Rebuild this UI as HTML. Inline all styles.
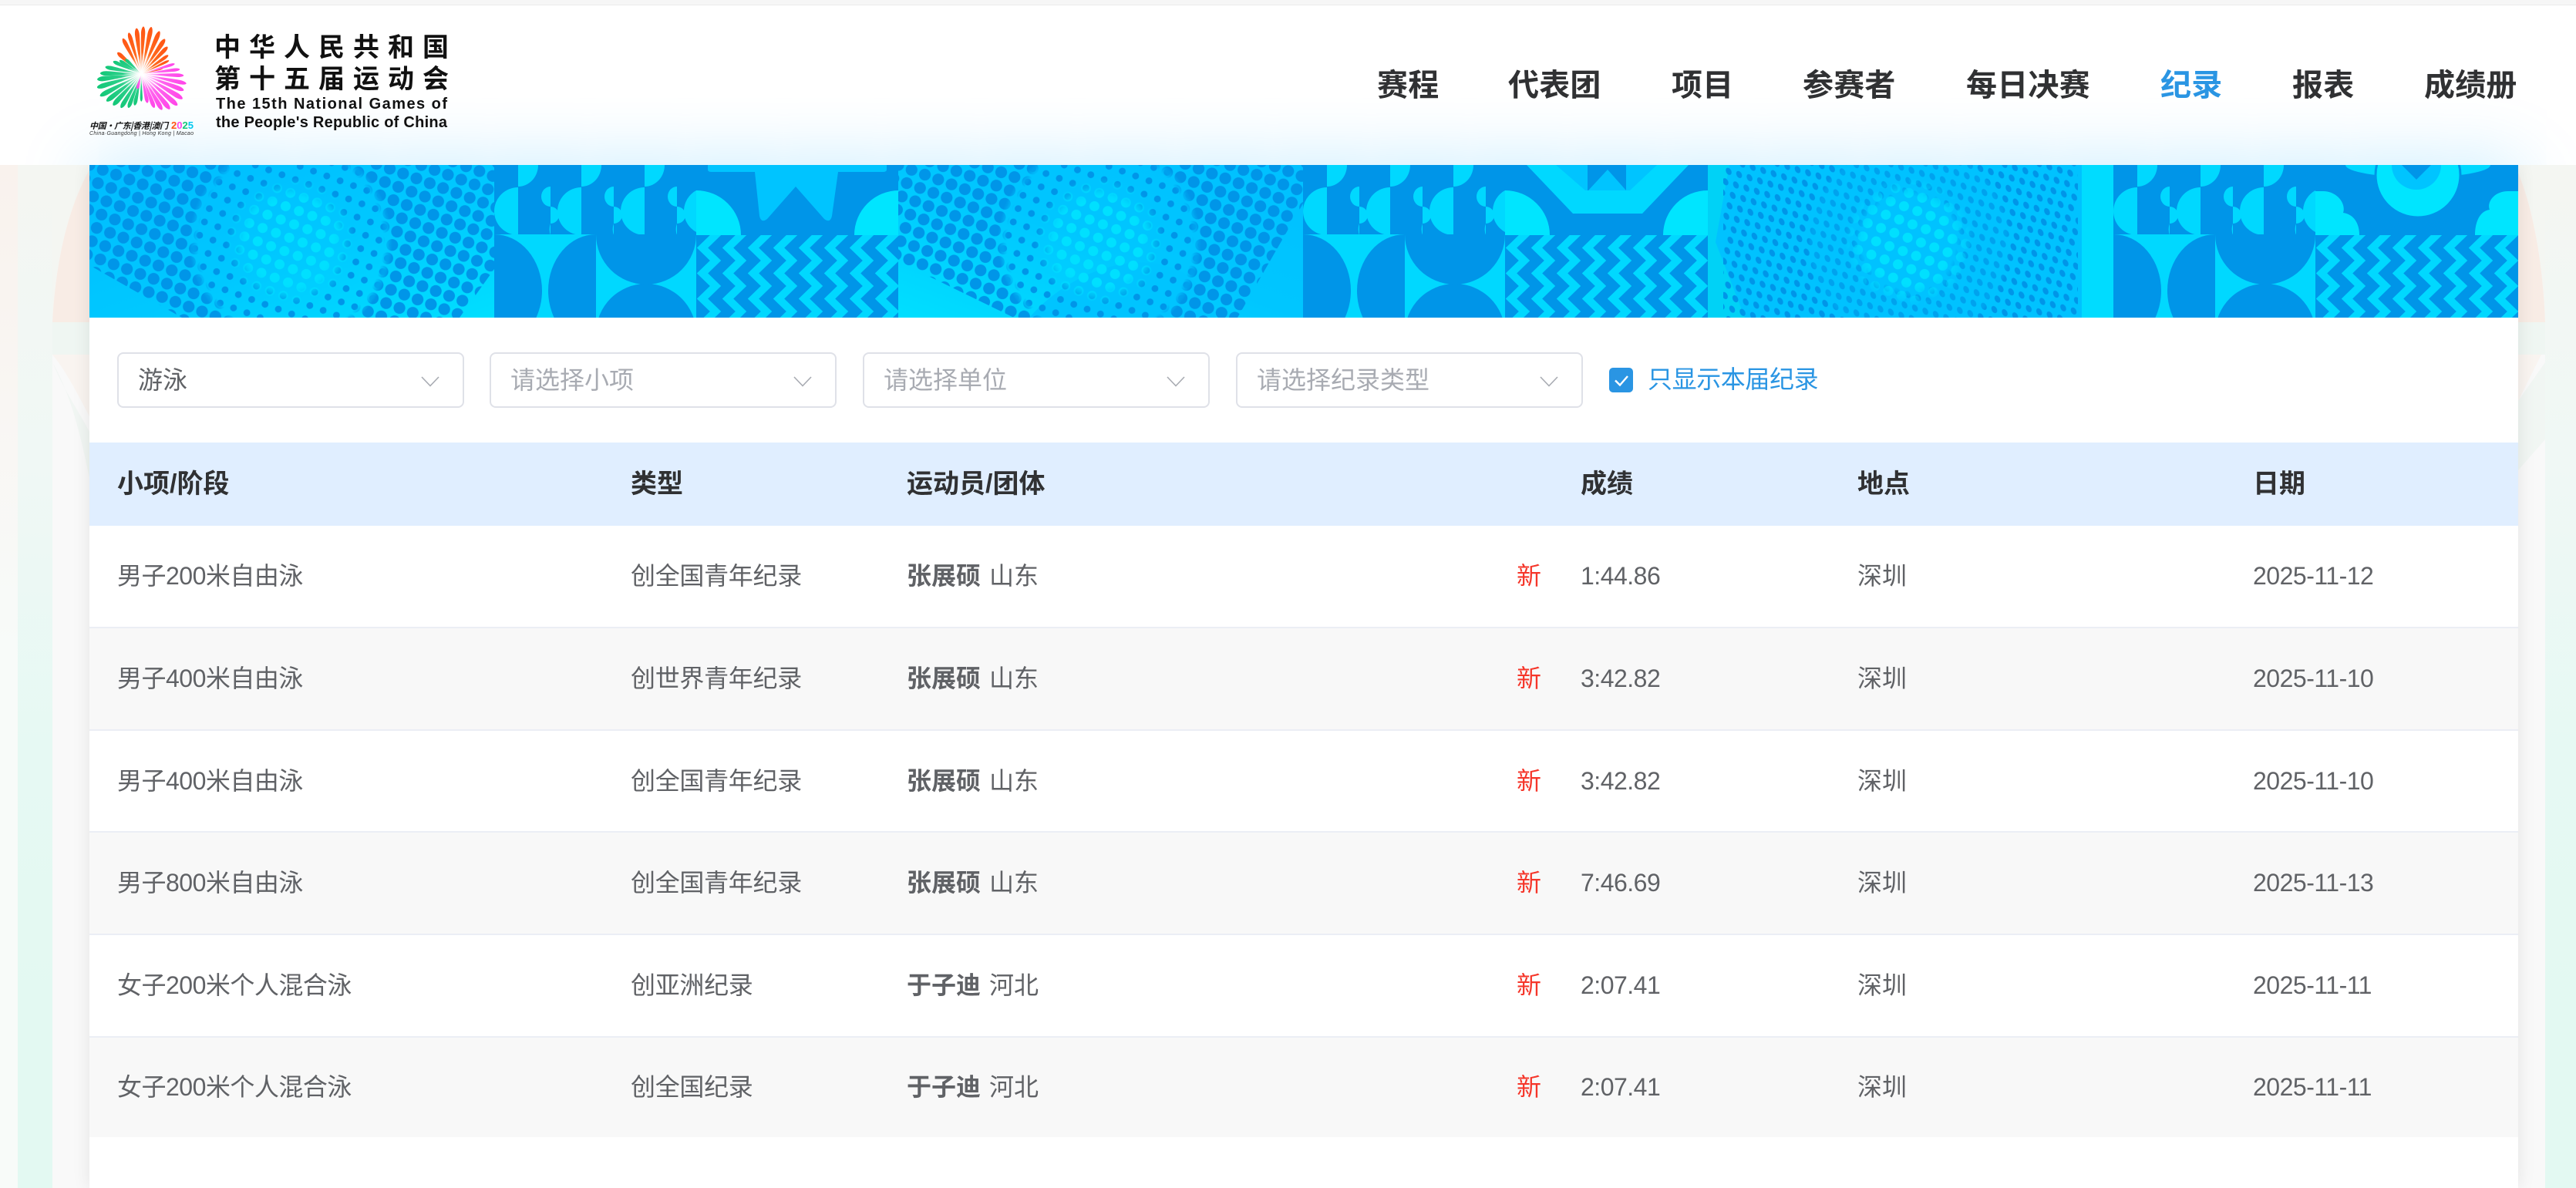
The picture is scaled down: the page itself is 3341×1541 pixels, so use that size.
<!DOCTYPE html>
<html lang="zh-CN">
<head>
<meta charset="utf-8">
<title>纪录</title>
<style>
html,body{margin:0;padding:0}
body{width:3341px;height:1541px;overflow:hidden;position:relative;background:#fafbfa;font-family:"Liberation Sans","Noto Sans CJK SC",sans-serif;font-size:32px;color:#606266}
.abs{position:absolute}
#top{left:0;top:0;width:3341px;height:6px;background:#f6f6f6;border-bottom:1px solid #ebebeb}
#hdr{left:0;top:7px;width:3341px;height:207px;background:#fff;overflow:hidden}
#glow{left:116px;top:207px;width:3150px;height:100px;box-shadow:0 0 90px rgba(0,170,255,.25)}
.nav{position:absolute;top:88px;height:46px;line-height:46px;font-size:40px;font-weight:700;color:#303133;white-space:nowrap;letter-spacing:.2px}
#card{left:116px;top:214px;width:3150px;height:1327px;background:#fff;box-shadow:0 0 22px rgba(0,0,0,.09)}
.sel{position:absolute;top:457px;height:68px;width:446px;border:2px solid #dfe1e8;border-radius:8px;background:#fff;line-height:68px;box-sizing:content-box}
.sel span{position:absolute;left:25px;top:0;white-space:nowrap}
.ph{color:#a8abb2}
.sel svg{position:absolute;left:392px;top:29px}
#thead{left:116px;top:574px;width:3150px;height:108px;background:#e0eeff;color:#303133;font-weight:700;line-height:108px;font-size:34px}
#thead span,.r span{position:absolute;top:0;white-space:nowrap}
.r{position:absolute;left:116px;width:3150px;box-sizing:content-box}
.b{border-bottom:2px solid #ebeef5}
.s{background:#f8f8f8}
.n{letter-spacing:-.5px}
.t{letter-spacing:-.3px}
.new{color:#f5362a}
.a{font-weight:700}
</style>
</head>
<body>

<svg class="abs" style="left:0;top:0" width="3341" height="1541" viewBox="0 0 3341 1541">
  <defs>
    <linearGradient id="bL" x1="0" y1="214" x2="0" y2="1000" gradientUnits="userSpaceOnUse"><stop offset="0" stop-color="#f9f2ed"/><stop offset=".4" stop-color="#f9f6f3"/><stop offset=".8" stop-color="#f8fbf9"/></linearGradient>
    <linearGradient id="bM" x1="0" y1="214" x2="0" y2="1300" gradientUnits="userSpaceOnUse"><stop offset="0" stop-color="#f4f6f2"/><stop offset=".35" stop-color="#f0f8f5"/><stop offset=".7" stop-color="#e6f9f3"/><stop offset="1" stop-color="#e3f9f2"/></linearGradient>
  </defs>
  <rect x="0" y="214" width="23" height="1327" fill="url(#bL)"/>
  <rect x="23" y="214" width="45" height="1327" fill="url(#bM)"/>
  <rect x="68" y="214" width="48" height="1327" fill="#f9f9f9"/>
  <path d="M68 214H116V220C88 270 72 340 68 418Z" fill="#f4f6f2"/>
  <path d="M116 220C88 270 72 340 68 418H116Z" fill="#f8ece5"/>
  <path d="M68 418H116V460H68Z" fill="#eff6f2"/>
  <path d="M68 460H116V540C100 510 85 480 68 460Z" fill="#f9f4f0"/>
  <path d="M68 470C85 500 100 540 116 620V560C100 530 85 510 68 470Z" fill="#f1f6f3"/>

  <rect x="3301" y="214" width="40" height="1327" fill="url(#bM)"/>
  <rect x="3266" y="214" width="35" height="1327" fill="#f9f9f9"/>
  <path d="M3266 214V224C3285 270 3298 340 3301 418V214Z" fill="#f4f6f2"/>
  <path d="M3266 224C3285 270 3298 340 3301 418H3266Z" fill="#f8ece5"/>
  <path d="M3266 418H3301V460H3266Z" fill="#eff6f2"/>
  <path d="M3266 460H3296L3266 520Z" fill="#f9f4f0"/>
  <path d="M3266 520L3301 470V570L3266 610Z" fill="#f1f6f3"/>
</svg>

<div id="card" class="abs"></div>

<svg class="abs" style="left:116px;top:214px" width="3150" height="198" viewBox="0 0 3150 198">
  <defs>
    <pattern id="z" width="33" height="33" patternUnits="userSpaceOnUse" patternTransform="translate(0,25)"><path d="M8 -16.5L25 0L8 16.5L25 33L8 49.5" fill="none" stroke="#00d8ff" stroke-width="10"/></pattern>
    <pattern id="dB" width="26" height="26" patternUnits="userSpaceOnUse" patternTransform="rotate(-25)"><circle cx="0" cy="0" r="7.6" fill="#0095e8"/><circle cx="26" cy="0" r="7.6" fill="#0095e8"/><circle cx="0" cy="26" r="7.6" fill="#0095e8"/><circle cx="26" cy="26" r="7.6" fill="#0095e8"/><circle cx="13" cy="13" r="7.6" fill="#0095e8"/></pattern>
    <pattern id="dS" width="26" height="26" patternUnits="userSpaceOnUse" patternTransform="rotate(-25)"><circle cx="0" cy="0" r="4.4" fill="#0095e8"/><circle cx="26" cy="0" r="4.4" fill="#0095e8"/><circle cx="0" cy="26" r="4.4" fill="#0095e8"/><circle cx="26" cy="26" r="4.4" fill="#0095e8"/><circle cx="13" cy="13" r="4.4" fill="#0095e8"/></pattern>
    <pattern id="dL" width="26" height="26" patternUnits="userSpaceOnUse" patternTransform="rotate(-25)"><circle cx="0" cy="0" r="6.5" fill="#00e0ff"/><circle cx="26" cy="0" r="6.5" fill="#00e0ff"/><circle cx="0" cy="26" r="6.5" fill="#00e0ff"/><circle cx="26" cy="26" r="6.5" fill="#00e0ff"/><circle cx="13" cy="13" r="6.5" fill="#00e0ff"/></pattern>
    <pattern id="dT" width="20" height="20" patternUnits="userSpaceOnUse" patternTransform="rotate(-28)"><ellipse cx="10" cy="10" rx="3.4" ry="5" fill="#0095e8"/><ellipse cx="0" cy="0" rx="3.4" ry="5" fill="#0095e8"/><ellipse cx="20" cy="0" rx="3.4" ry="5" fill="#0095e8"/><ellipse cx="0" cy="20" rx="3.4" ry="5" fill="#0095e8"/><ellipse cx="20" cy="20" rx="3.4" ry="5" fill="#0095e8"/></pattern>

    <radialGradient id="gBig" gradientUnits="userSpaceOnUse" cx="261" cy="100" r="300">
      <stop offset=".4" stop-color="#000"/><stop offset=".44" stop-color="#fff"/><stop offset="1" stop-color="#fff"/>
    </radialGradient>
    <radialGradient id="gMid" gradientUnits="userSpaceOnUse" cx="261" cy="100" r="300">
      <stop offset=".2" stop-color="#000"/><stop offset=".24" stop-color="#fff"/><stop offset=".4" stop-color="#fff"/><stop offset=".44" stop-color="#000"/>
    </radialGradient>
    <radialGradient id="gLit" gradientUnits="userSpaceOnUse" cx="261" cy="100" r="300">
      <stop offset=".18" stop-color="#fff"/><stop offset=".28" stop-color="#000"/>
    </radialGradient>
    <mask id="mBig" maskUnits="userSpaceOnUse" x="0" y="0" width="525" height="198"><rect width="525" height="198" fill="url(#gBig)"/></mask>
    <mask id="mMid" maskUnits="userSpaceOnUse" x="0" y="0" width="525" height="198"><rect width="525" height="198" fill="url(#gMid)"/></mask>
    <mask id="mLit" maskUnits="userSpaceOnUse" x="0" y="0" width="525" height="198"><rect width="525" height="198" fill="url(#gLit)"/></mask>

    <linearGradient id="h1" x1="0" y1="0" x2="1" y2="1"><stop offset="0" stop-color="#00bcff"/><stop offset=".55" stop-color="#00c8ff"/><stop offset="1" stop-color="#00dfff"/></linearGradient>
    <linearGradient id="h2" x1="0" y1="1" x2="1" y2="0"><stop offset="0" stop-color="#00dfff"/><stop offset=".5" stop-color="#00c6ff"/><stop offset="1" stop-color="#00c0ff"/></linearGradient>

    <clipPath id="c1"><polygon points="0,0 525,0 525,135 480,198 120,198 0,130"/></clipPath>
    <clipPath id="c2"><polygon points="0,0 525,0 525,50 440,198 150,198 0,125"/></clipPath>
    <clipPath id="c3"><polygon points="20,0 480,0 480,198 20,198"/></clipPath>
    <clipPath id="rowB"><rect x="0" y="90" width="262" height="108"/></clipPath>
    <clipPath id="tile"><rect x="0" y="0" width="263" height="198"/></clipPath>

    <g id="strip" fill="#00d8ff">
      <path d="M31 29A31 31 0 0 0 31 91Z"/>
      <path d="M31 0V28A26 28 0 0 0 57 0Z"/>
      <path d="M73 28A12 13 0 0 0 73 54Z"/>
      <path d="M73 54A11 11 0 0 1 73 76Z"/>
      <path d="M73 76A8 14 0 0 0 73 91Z"/>
    </g>
    <g id="ta" clip-path="url(#tile)">
      <rect width="263" height="198" fill="#0095e8"/>
      <use href="#strip"/>
      <use href="#strip" x="82"/>
      <use href="#strip" x="164"/>
      <use href="#strip" x="246"/>
      <g clip-path="url(#rowB)">
        <rect x="0" y="90" width="263" height="108" fill="#00d8ff"/>
        <path d="M0 90A62 73 0 0 1 0 236Z" fill="#0095e8"/>
        <path d="M132 90A62 73 0 0 0 132 236Z" fill="#0095e8"/>
        <circle cx="197" cy="90" r="65" fill="#0095e8"/>
        <circle cx="197" cy="219" r="65" fill="#0095e8"/>
      </g>
    </g>
    <g id="tb">
      <rect width="263" height="198" fill="#0095e8"/>
      <rect y="91" width="263" height="107" fill="url(#z)"/>
    </g>
  </defs>

  <!-- halftone 1 -->
  <g>
    <rect width="526" height="198" fill="url(#h1)"/>
    <g clip-path="url(#c1)">
      <rect width="525" height="198" fill="url(#dB)" mask="url(#mBig)"/>
      <rect width="525" height="198" fill="url(#dS)" mask="url(#mMid)"/>
      <rect width="525" height="198" fill="url(#dL)" mask="url(#mLit)"/>
    </g>
  </g>
  <!-- tile A -->
  <use href="#ta" x="525"/>
  <!-- tile B star -->
  <g transform="translate(787,0)">
    <use href="#tb"/>
    <path d="M15 0V6Q15 9 20 9H76L82 66Q84 76 92 70L129 28L166 70Q174 76 176 66L184 9H242Q247 9 247 6V0Z" fill="#00c4ff"/>
    <path d="M0 33A58 58 0 0 1 58 91H0Z" fill="#00e5ff"/>
    <path d="M263 33A58 58 0 0 0 205 91H263Z" fill="#00e5ff"/>
  </g>

  <!-- halftone 2 -->
  <g transform="translate(1049,0)">
    <rect width="526" height="198" fill="url(#h2)"/>
    <path d="M170 198C230 130 320 110 370 140C400 160 410 185 412 198Z" fill="#00c4ff"/>
    <g clip-path="url(#c2)">
      <rect width="525" height="198" fill="url(#dB)" mask="url(#mBig)"/>
      <rect width="525" height="198" fill="url(#dS)" mask="url(#mMid)"/>
      <rect width="525" height="198" fill="url(#dL)" mask="url(#mLit)"/>
    </g>
  </g>
  <!-- tile A -->
  <use href="#ta" x="1574"/>
  <!-- tile B V -->
  <g transform="translate(1836,0)">
    <use href="#tb"/>
    <path d="M28 0H238L178 63H88Z" fill="#00d8ff"/>
    <path d="M66 0H197L162 33H104Z" fill="#00c4ff"/>
    <rect x="107" y="0" width="50" height="33" fill="#0095e8"/>
    <path d="M108 33L133 6L157 33Z" fill="#00c4ff"/>
    <path d="M0 33A58 58 0 0 1 58 91H0Z" fill="#00e5ff"/>
    <path d="M263 33A58 58 0 0 0 205 91H263Z" fill="#00e5ff"/>
  </g>

  <!-- halftone 3 -->
  <g transform="translate(2099,0)">
    <rect width="527" height="198" fill="#00c2ff"/>
    <path d="M0 0H28L10 100L48 198H0Z" fill="#00d2f6"/>
    <rect x="485" width="42" height="198" fill="#00dcff"/>
    <rect width="480" height="198" fill="url(#dT)" clip-path="url(#c3)" mask="url(#mBig)"/>
    <rect width="480" height="198" fill="url(#dT)" clip-path="url(#c3)" mask="url(#mMid)" opacity=".7"/>
    <rect width="480" height="198" fill="url(#dL)" clip-path="url(#c3)" mask="url(#mLit)"/>
  </g>
  <!-- tile A -->
  <use href="#ta" x="2625"/>
  <!-- tile B circle -->
  <g transform="translate(2887,0)">
    <use href="#tb"/>
    <ellipse cx="133" cy="0" rx="94" ry="16" fill="#00d8ff"/>
    <circle cx="133" cy="13" r="55" fill="#00e5ff" stroke="#0095e8" stroke-width="3"/>
    <circle cx="131" cy="0" r="32" fill="#00c4ff"/>
    <path d="M112 0H150L131 19Z" fill="#0095e8"/>
    <g fill="#00e5ff">
      <path d="M0 91V34H10C28 34 40 50 36 62C50 64 57 76 57 91Z"/>
      <path d="M263 91V34H250C232 34 222 48 226 58C212 60 207 76 207 91Z"/>
    </g>
  </g>
</svg>

<div id="top" class="abs"></div>
<div id="hdr" class="abs">
  <div id="glow" class="abs"></div>
</div>

<svg class="abs" style="left:0;top:0" width="700" height="214" viewBox="0 0 700 214">
  <defs>
    <linearGradient id="go" gradientUnits="userSpaceOnUse" x1="0" y1="0" x2="0" y2="-100"><stop offset=".05" stop-color="#fff"/><stop offset=".45" stop-color="#ff6a1e"/><stop offset="1" stop-color="#ff5414"/></linearGradient>
    <linearGradient id="gg" gradientUnits="userSpaceOnUse" x1="0" y1="0" x2="0" y2="-100"><stop offset=".05" stop-color="#fff"/><stop offset=".45" stop-color="#2fd08c"/><stop offset="1" stop-color="#12c777"/></linearGradient>
    <linearGradient id="gm" gradientUnits="userSpaceOnUse" x1="0" y1="0" x2="0" y2="-100"><stop offset=".05" stop-color="#fff"/><stop offset=".45" stop-color="#ff66ee"/><stop offset="1" stop-color="#ff44e8"/></linearGradient>
    <path id="po" d="M0 0C1 -30 7 -60 8 -85C8 -95 3 -100 0 -100C-3 -100 -8 -95 -8 -85C-7 -60 -1 -30 0 0Z" fill="url(#go)"/>
    <path id="pg" d="M0 0C1 -30 7 -60 8 -85C8 -95 3 -100 0 -100C-3 -100 -8 -95 -8 -85C-7 -60 -1 -30 0 0Z" fill="url(#gg)"/>
    <path id="pm" d="M0 0C1 -30 7 -60 8 -85C8 -95 3 -100 0 -100C-3 -100 -8 -95 -8 -85C-7 -60 -1 -30 0 0Z" fill="url(#gm)"/>
  </defs>
  <g transform="translate(183.3,96) scale(.3333)">
    <use href="#po" transform="rotate(-48) scale(1,1.25)"/>
    <use href="#po" transform="rotate(-27.5) scale(1,1.56)"/>
    <use href="#po" transform="rotate(-17) scale(1,1.68)"/>
    <use href="#po" transform="rotate(-6) scale(1.1,1.79)"/>
    <use href="#po" transform="rotate(2.5) scale(1,1.85)"/>
    <use href="#po" transform="rotate(12) scale(1.1,1.87)"/>
    <use href="#po" transform="rotate(23) scale(1.1,1.81)"/>
    <use href="#po" transform="rotate(34) scale(1.1,1.64)"/>
    <use href="#po" transform="rotate(44) scale(1,1.47)"/>
    <use href="#po" transform="rotate(55) scale(.8,1.28)"/>
    <use href="#po" transform="rotate(64) scale(.6,1.2)"/>
    <use href="#po" transform="rotate(75) scale(.5,.88)"/>
    <use href="#pg" transform="rotate(-47) scale(.8,.85)"/>
    <use href="#pg" transform="rotate(-58) scale(.8,1)"/>
    <use href="#pg" transform="rotate(-66) scale(.9,1.2)"/>
    <use href="#pg" transform="rotate(-79) scale(1,1.43)"/>
    <use href="#pg" transform="rotate(-89) scale(1.1,1.6)"/>
    <use href="#pg" transform="rotate(-97) scale(1.2,1.73)"/>
    <use href="#pg" transform="rotate(-107) scale(1.2,1.8)"/>
    <use href="#pg" transform="rotate(-118) scale(1.2,1.82)"/>
    <use href="#pg" transform="rotate(-128) scale(1.2,1.72)"/>
    <use href="#pg" transform="rotate(-138) scale(1.2,1.64)"/>
    <use href="#pg" transform="rotate(-149) scale(1.1,1.54)"/>
    <use href="#pg" transform="rotate(-159) scale(1,1.41)"/>
    <use href="#pg" transform="rotate(-168) scale(.9,1.25)"/>
    <use href="#pg" transform="rotate(-180) scale(.6,1.07)"/>
    <use href="#pm" transform="rotate(73) scale(.7,1.36)"/>
    <use href="#pm" transform="rotate(83) scale(.8,1.51)"/>
    <use href="#pm" transform="rotate(92) scale(.9,1.65)"/>
    <use href="#pm" transform="rotate(102) scale(1,1.79)"/>
    <use href="#pm" transform="rotate(111) scale(1.1,1.77)"/>
    <use href="#pm" transform="rotate(121) scale(1.2,1.87)"/>
    <use href="#pm" transform="rotate(131) scale(1.2,1.86)"/>
    <use href="#pm" transform="rotate(141) scale(1.2,1.76)"/>
    <use href="#pm" transform="rotate(150) scale(1.1,1.61)"/>
    <use href="#pm" transform="rotate(159) scale(1,1.41)"/>
    <use href="#pm" transform="rotate(168) scale(.9,1.15)"/>
    <use href="#pm" transform="rotate(-165) scale(.7,.6)"/>
  </g>
  <g font-family="'Liberation Sans','Noto Sans CJK SC',sans-serif" fill="#111">
    <text x="116" y="167" font-size="11" font-weight="700" font-style="italic" textLength="102" lengthAdjust="spacing" font-family="'Noto Sans CJK SC',sans-serif">中国·广东|香港|澳门</text>
    <text x="222" y="167" font-size="13" font-weight="700" textLength="29" lengthAdjust="spacingAndGlyphs"><tspan fill="#ff5414">2</tspan><tspan fill="#ff44e8">0</tspan><tspan fill="#12c777">2</tspan><tspan fill="#00c8f0">5</tspan></text>
    <text x="116" y="175" font-size="7" font-style="italic" fill="#333" textLength="135" lengthAdjust="spacing">China·Guangdong | Hong Kong | Macao</text>
    <text x="278" y="73" font-size="34" font-weight="700" font-family="'Noto Sans CJK SC',sans-serif" textLength="304" lengthAdjust="spacing">中华人民共和国</text>
    <text x="278" y="114" font-size="34" font-weight="700" font-family="'Noto Sans CJK SC',sans-serif" textLength="304" lengthAdjust="spacing">第十五届运动会</text>
    <text x="280" y="141" font-size="20" textLength="300" lengthAdjust="spacing" font-weight="700">The 15th National Games of</text>
    <text x="280" y="165" font-size="20" textLength="300" lengthAdjust="spacing" font-weight="700">the People's Republic of China</text>
  </g>
</svg>

<div class="nav" style="left:1786px">赛程</div>
<div class="nav" style="left:1956px">代表团</div>
<div class="nav" style="left:2168px">项目</div>
<div class="nav" style="left:2338px">参赛者</div>
<div class="nav" style="left:2550px">每日决赛</div>
<div class="nav" style="left:2802px;color:#2a95e3">纪录</div>
<div class="nav" style="left:2973px">报表</div>
<div class="nav" style="left:3144px">成绩册</div>

<div class="sel" style="left:152px"><span>游泳</span><svg width="24" height="14" viewBox="0 0 24 14"><path d="M1 1L12 12.5L23 1" fill="none" stroke="#a8abb2" stroke-width="1.6"/></svg></div>
<div class="sel" style="left:635px"><span class="ph">请选择小项</span><svg width="24" height="14" viewBox="0 0 24 14"><path d="M1 1L12 12.5L23 1" fill="none" stroke="#a8abb2" stroke-width="1.6"/></svg></div>
<div class="sel" style="left:1119px"><span class="ph">请选择单位</span><svg width="24" height="14" viewBox="0 0 24 14"><path d="M1 1L12 12.5L23 1" fill="none" stroke="#a8abb2" stroke-width="1.6"/></svg></div>
<div class="sel" style="left:1603px"><span class="ph">请选择纪录类型</span><svg width="24" height="14" viewBox="0 0 24 14"><path d="M1 1L12 12.5L23 1" fill="none" stroke="#a8abb2" stroke-width="1.6"/></svg></div>

<svg class="abs" style="left:2087px;top:477px" width="32" height="32" viewBox="0 0 32 32"><rect width="31" height="32" rx="5" fill="#2a95e3"/><path d="M8 16.5L14 22.5L24 11" fill="none" stroke="#fff" stroke-width="2.4"/></svg>
<div class="abs" style="left:2137px;top:468px;height:48px;line-height:48px;color:#2a95e3;white-space:nowrap;letter-spacing:-.4px">只显示本届纪录</div>

<div id="thead" class="abs">
  <span style="left:36px">小项/阶段</span>
  <span style="left:702px">类型</span>
  <span style="left:1060px">运动员/团体</span>
  <span style="left:1934px">成绩</span>
  <span style="left:2293px">地点</span>
  <span style="left:2806px">日期</span>
</div>

<div class="r b" style="top:682px;height:131px;line-height:131px">
  <span style="left:36px" class="n">男子200米自由泳</span><span style="left:702px" class="t">创全国青年纪录</span><span style="left:1060px" class="a">张展硕</span><span style="left:1167px">山东</span><span style="left:1851px" class="new">新</span><span style="left:1934px" class="n">1:44.86</span><span style="left:2293px">深圳</span><span style="left:2806px" class="n">2025-11-12</span>
</div>
<div class="r b s" style="top:815px;height:131px;line-height:131px">
  <span style="left:36px" class="n">男子400米自由泳</span><span style="left:702px" class="t">创世界青年纪录</span><span style="left:1060px" class="a">张展硕</span><span style="left:1167px">山东</span><span style="left:1851px" class="new">新</span><span style="left:1934px" class="n">3:42.82</span><span style="left:2293px">深圳</span><span style="left:2806px" class="n">2025-11-10</span>
</div>
<div class="r b" style="top:948px;height:130px;line-height:130px">
  <span style="left:36px" class="n">男子400米自由泳</span><span style="left:702px" class="t">创全国青年纪录</span><span style="left:1060px" class="a">张展硕</span><span style="left:1167px">山东</span><span style="left:1851px" class="new">新</span><span style="left:1934px" class="n">3:42.82</span><span style="left:2293px">深圳</span><span style="left:2806px" class="n">2025-11-10</span>
</div>
<div class="r b s" style="top:1080px;height:131px;line-height:131px">
  <span style="left:36px" class="n">男子800米自由泳</span><span style="left:702px" class="t">创全国青年纪录</span><span style="left:1060px" class="a">张展硕</span><span style="left:1167px">山东</span><span style="left:1851px" class="new">新</span><span style="left:1934px" class="n">7:46.69</span><span style="left:2293px">深圳</span><span style="left:2806px" class="n">2025-11-13</span>
</div>
<div class="r b" style="top:1213px;height:131px;line-height:131px">
  <span style="left:36px" class="n">女子200米个人混合泳</span><span style="left:702px" class="t">创亚洲纪录</span><span style="left:1060px" class="a">于子迪</span><span style="left:1167px">河北</span><span style="left:1851px" class="new">新</span><span style="left:1934px" class="n">2:07.41</span><span style="left:2293px">深圳</span><span style="left:2806px" class="n">2025-11-11</span>
</div>
<div class="r s" style="top:1346px;height:129px;line-height:129px">
  <span style="left:36px" class="n">女子200米个人混合泳</span><span style="left:702px" class="t">创全国纪录</span><span style="left:1060px" class="a">于子迪</span><span style="left:1167px">河北</span><span style="left:1851px" class="new">新</span><span style="left:1934px" class="n">2:07.41</span><span style="left:2293px">深圳</span><span style="left:2806px" class="n">2025-11-11</span>
</div>

</body>
</html>
